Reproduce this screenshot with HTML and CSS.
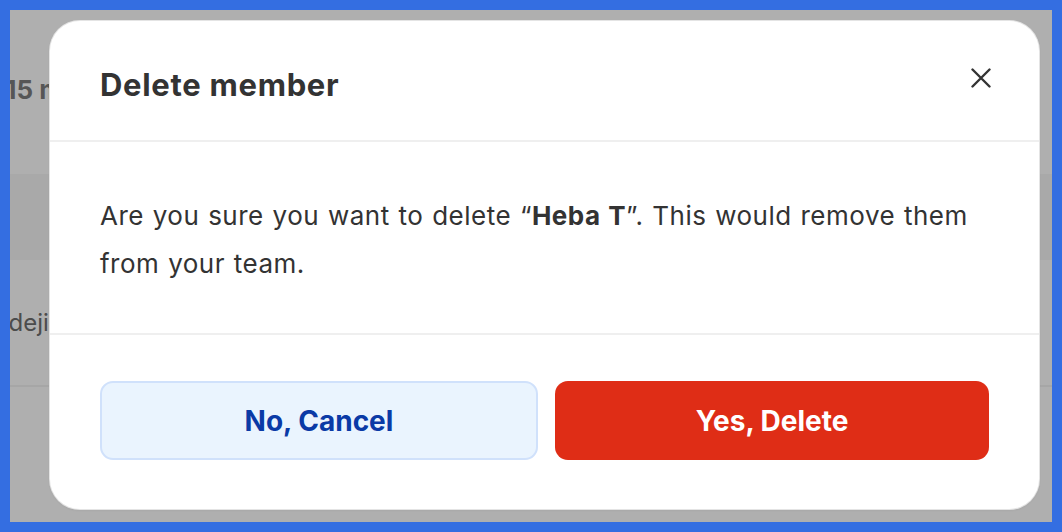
FILE: index.html
```html
<!DOCTYPE html>
<html>
<head>
<meta charset="utf-8">
<link rel="stylesheet" href="styles.css">
</head>
<body>
<div class="frame">
  <div class="page">
    <div class="page-head"><span class="count">115 members</span></div>
    <div class="table-head"></div>
    <div class="table-row"><span class="cell">Adeji</span></div>
  </div>
  <div class="modal">
    <div class="modal-header">
      <h2 class="modal-title">Delete member</h2>
      <button class="close" aria-label="Close">
        <svg width="20" height="20" viewBox="0 0 20 20"><path d="M1.5 1.5 L18.5 18.5 M18.5 1.5 L1.5 18.5" stroke="#333" stroke-width="2.4" stroke-linecap="round" fill="none"/></svg>
      </button>
    </div>
    <div class="modal-body">
      <p class="message">Are you sure you want to delete “<strong>Heba T</strong>”. This would remove them from your team.</p>
    </div>
    <div class="modal-footer">
      <button class="btn btn-cancel">No, Cancel</button>
      <button class="btn btn-delete">Yes, Delete</button>
    </div>
  </div>
</div>
</body>
</html>
```

FILE: styles.css
```css
* { box-sizing: border-box; }
html, body { margin: 0; padding: 0; }
body { font-family: Inter, "Noto Sans", sans-serif; }

.frame {
  width: 1062px;
  height: 532px;
  border: 10px solid #346ee1;
  position: relative;
  overflow: hidden;
  background: #afafaf;
}

.page {
  display: flex;
  flex-direction: column;
}
.page-head {
  height: 164px;
  padding-top: 64px;
  margin-left: -16px;
}
.count {
  font-size: 26px;
  font-weight: 700;
  color: #565656;
}
.table-head {
  height: 86px;
  background: #a9a9a9;
}
.table-row {
  height: 127px;
  border-bottom: 2px solid #a6a6a6;
  display: flex;
  align-items: center;
  margin-left: -18px;
}
.cell {
  font-size: 24px;
  color: #4c4c4c;
}

.modal {
  position: absolute;
  left: 40px;
  top: 11px;
  width: 989px;
  height: 488px;
  background: #fff;
  border-radius: 30px;
  box-shadow: 0 0 0 1px #e4e4e4, 0 1px 3px rgba(0,0,0,0.08);
  display: flex;
  flex-direction: column;
  overflow: hidden;
}

.modal-header {
  height: 121px;
  flex: none;
  padding: 0 48px 0 50px;
  border-bottom: 2px solid #efefef;
  display: flex;
  align-items: center;
  justify-content: space-between;
}
.modal-title {
  margin: 8px 0 0 0;
  font-size: 31px;
  font-weight: 700;
  color: #333;
  letter-spacing: 0.7px;
}
.close {
  border: 0;
  background: none;
  padding: 0;
  margin-top: -6px;
  width: 20px;
  height: 20px;
  display: flex;
  cursor: pointer;
}

.modal-body {
  height: 193px;
  flex: none;
  padding: 50px 50px 0 50px;
  border-bottom: 2px solid #efefef;
}
.message {
  margin: 0;
  font-size: 26px;
  line-height: 48px;
  color: #333;
  letter-spacing: 0.5px;
  word-spacing: 1px;
}
.message strong { font-weight: 700; }

.modal-footer {
  flex: 1;
  padding: 46px 50px 0 50px;
  display: flex;
  gap: 17px;
}
.btn {
  flex: 1 1 0;
  min-width: 0;
  height: 79px;
  border-radius: 13px;
  font-family: inherit;
  font-size: 28px;
  font-weight: 700;
  cursor: pointer;
}
.btn-cancel {
  background: #eaf4fe;
  border: 2px solid #d0e1fb;
  color: #0a3aa6;
}
.btn-delete {
  background: #df2d16;
  border: 0;
  color: #fff;
}
```
